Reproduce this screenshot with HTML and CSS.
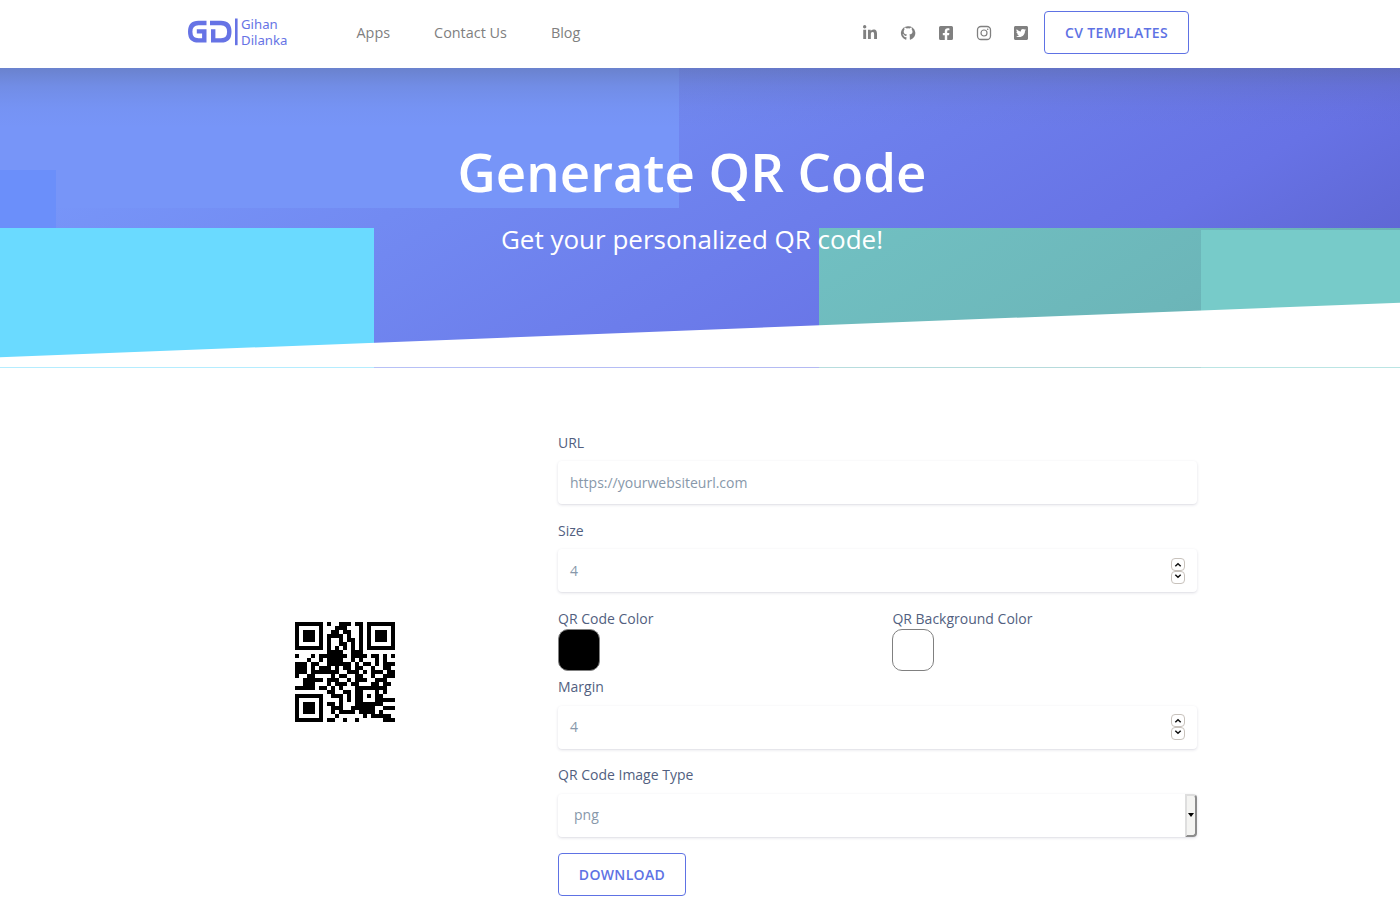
FILE: index.html
```html
<!DOCTYPE html>
<html lang="en">
<head>
<meta charset="utf-8">
<title>Generate QR Code</title>
<link rel="stylesheet" href="styles.css">
</head>
<body>
<header class="header">
  <a class="logo">
    <svg class="logo-mark" width="50" height="28" viewBox="0 0 50 28" fill="none" stroke="#6673e5" stroke-width="4.4">
      <path d="M18.5 5H10.5Q2.2 5 2.2 13.7T10.500 22.4H16.3V13.4H8.8"/>
      <path d="M22 5H33Q41.3 5 41.3 13.7T33 22.4H25.2V11.2"/>
      <path d="M48.3.5V27.2" stroke-width="2.6"/>
    </svg>
    <span class="logo-text"><span>Gihan</span><span>Dilanka</span></span>
  </a>
  <nav class="nav"><a>Apps</a><a>Contact Us</a><a>Blog</a></nav>
  <div class="social">
    <svg viewBox="0 0 448 512"><path d="M100.3 448H7.4V148.9h92.9zM53.8 108.1C24.1 108.1 0 83.5 0 53.8a53.8 53.8 0 0 1 107.6 0c0 29.7-24.1 54.3-53.8 54.3zM447.9 448h-92.7V302.4c0-34.7-.7-79.2-48.3-79.2-48.3 0-55.7 37.7-55.7 76.7V448h-92.8V148.9h89.1v40.8h1.3c12.4-23.5 42.7-48.3 87.9-48.3 94 0 111.3 61.9 111.3 142.3V448z"/></svg>
    <svg viewBox="0 0 16 16"><path fill-rule="evenodd" d="M8 1.200A6.900 6.900 0 0 0 5.800 14.700c.5.1.6-.3.6-.6v-2c-2 .4-2.500-.8-2.700-1.300-.2-.4-.5-.9-.8-1.100-.3-.2-.7-.5 0-.5.6 0 1.100.6 1.300.8.7 1.200 1.800.9 2.300.7.1-.5.3-.9.5-1.100C5 9.400 3.700 8.900 3.700 6.600c0-.8.3-1.500.8-2-.1-.2-.4-1 .1-2 0 0 .7-.2 2.100.8a7 7 0 0 1 2.800 0c1.400-1 2.100-.8 2.100-.8.4 1 .1 1.800.1 2 .5.5.8 1.200.8 2 0 2.300-1.500 2.800-3.200 3 .3.2.5.7.5 1.400v3.100c0 .3.1.7.6.6A6.900 6.900 0 0 0 8 1.200z"/></svg>
    <svg viewBox="0 0 448 512"><path d="M400 32H48A48 48 0 0 0 0 80v352a48 48 0 0 0 48 48h137V328h-63v-72h63v-55c0-62 37-96 94-96 27 0 55 5 55 5v61h-31c-31 0-40 19-40 38v47h69l-11 72h-58v152h137a48 48 0 0 0 48-48V80a48 48 0 0 0-48-48z"/></svg>
    <svg viewBox="0 0 16 16"><rect x="1.500" y="1.500" width="13" height="13" rx="3.500" fill="none" stroke="#808080" stroke-width="1.300"/><circle cx="8" cy="8" r="3" fill="none" stroke="#808080" stroke-width="1.200"/><circle cx="11.700" cy="4.300" r=".8"/></svg>
    <svg viewBox="0 0 448 512"><path d="M400 32H48C21.500 32 0 53.500 0 80v352c0 26.500 21.500 48 48 48h352c26.500 0 48-21.500 48-48V80c0-26.500-21.500-48-48-48zm-48.900 158.800c.2 2.800.2 5.700.2 8.500 0 86.700-66 186.600-186.600 186.600-37.200 0-71.700-10.800-100.700-29.400 5.300.6 10.400.8 15.800.8 30.700 0 58.900-10.400 81.400-28-28.800-.6-53-19.500-61.300-45.500 10.100 1.500 19.200 1.500 29.600-1.200-30-6.100-52.500-32.500-52.500-64.400v-.8c8.700 4.900 18.900 7.900 29.600 8.300a65.400 65.400 0 0 1-29.200-54.600c0-12.200 3.200-23.400 8.900-33.100 32.300 39.800 80.800 65.800 135.200 68.600-9.300-44.500 24-80.600 64-80.600 18.900 0 35.900 7.900 47.900 20.700 14.800-2.800 29-8.300 41.600-15.800-4.900 15.200-15.200 28-28.800 36.100 13.200-1.400 26-5.100 37.800-10.200-8.900 13.100-20.100 24.700-32.900 34z"/></svg>
  </div>
  <a class="btn btn-cv">CV TEMPLATES</a>
</header>

<section class="hero">
  <svg class="hero-shapes" width="1400" height="300" viewBox="0 0 1400 300">
    <defs>
      <linearGradient id="teal" x1="0" y1="0" x2="1" y2=".4"><stop offset="0" stop-color="#71c0c2"/><stop offset=".7" stop-color="#6cb6b9"/><stop offset="1" stop-color="#69b0b3"/></linearGradient>
      <linearGradient id="shade" x1="0" y1="0" x2="0" y2="1"><stop offset="0" stop-color="#525f7f" stop-opacity=".35"/><stop offset=".3" stop-color="#525f7f" stop-opacity=".15"/><stop offset=".65" stop-color="#525f7f" stop-opacity=".04"/><stop offset="1" stop-color="#525f7f" stop-opacity="0"/></linearGradient>
    </defs>
    <path fill="#7795f8" d="M0 0h679v140H0z"/>
    <path fill="#6b8ffa" d="M0 102h56v58H0z"/>
    <path fill="#6adaff" d="M0 160h374v140H0z"/>
    <path fill="url(#teal)" d="M819 160h581v140H819z"/>
    <path fill="#77cbc9" d="M1201 162h199v138h-199z"/>
    <path fill="url(#shade)" d="M0 0h1400v60H0z"/>
    <path fill="#fff" d="M0 289.300 1400 234.700V299H0z"/>
    <path fill="#fff" opacity=".5" d="M0 299h1400v1H0z"/>
  </svg>
  <h1 class="hero-title">Generate QR Code</h1>
  <p class="hero-lead">Get your personalized QR code!</p>
</section>

<main class="main">
  <div class="preview"><svg class="qr" id="qr" width="100" height="100" viewBox="0 0 25 25" shape-rendering="crispEdges"></svg></div>
  <form class="form">
    <label class="label">URL</label>
    <div class="field">https://yourwebsiteurl.com</div>
    <label class="label">Size</label>
    <div class="field">4
      <span class="spinner"><svg viewBox="0 0 12 11"><path d="M3.300 7.200 6 4.700 8.700 7.200"/></svg><svg viewBox="0 0 12 11"><path d="M3.300 2.800 6 5.300 8.700 2.800"/></svg></span>
    </div>
    <div class="colors">
      <div><label class="label label-tight">QR Code Color</label><div class="swatch swatch-black"></div></div>
      <div><label class="label label-tight">QR Background Color</label><div class="swatch"></div></div>
    </div>
    <label class="label label-lower">Margin</label>
    <div class="field field-lower">4
      <span class="spinner"><svg viewBox="0 0 12 11"><path d="M3.300 7.200 6 4.700 8.700 7.200"/></svg><svg viewBox="0 0 12 11"><path d="M3.300 2.800 6 5.300 8.700 2.800"/></svg></span>
    </div>
    <label class="label label-lower">QR Code Image Type</label>
    <div class="field field-select"><span class="select-value">png</span><span class="select-arrow"></span></div>
    <a class="btn btn-download">DOWNLOAD</a>
  </form>
</main>
<script src="qr.js"></script>
</body>
</html>
```
FILE: styles.css
```css
* { box-sizing: border-box; }
body { margin: 0; height: 900px; overflow: hidden; background: #fff; color: #525f7f; font: 14px/21px "Open Sans", sans-serif; }
.header { display: flex; align-items: center; height: 68px; padding: 0 211px 2px 188px; background: #fff; }
.logo { display: flex; width: 168.500px; }
.logo-text { display: flex; flex-direction: column; margin-left: 3px; margin-top: -2px; color: #6673e5; font: 13.2px/16px "Noto Sans", sans-serif; }
.nav { display: flex; gap: 44px; margin-top: -2px; color: #7f7f7f; font-size: 14.4px; }
.social { display: flex; gap: 21.700px; margin-left: auto; margin-right: 14.800px; }
.social svg { width: 16px; height: 16px; fill: #808080; }
.btn { display: inline-flex; align-items: center; justify-content: center; height: 43px; border: 1px solid #5e72e4; border-radius: 4px; color: #5e72e4; font-weight: 600; font-size: 14px; letter-spacing: .35px; }
.btn-cv { width: 145px; margin-top: -1px; }
.btn-download { width: 128px; }
.hero { position: relative; height: 300px; padding-top: 70px; padding-right: 16px; text-align: center; color: #fff; background: linear-gradient(150deg, #7795f8 15%, #6772e5 74%, #555abf 105%); }
.hero-shapes { position: absolute; left: 0; top: 0; }
.hero-title { position: relative; margin: 0; font-size: 52.800px; line-height: 68px; font-weight: 600; }
.hero-lead { position: relative; margin: 17px 0 0; font-size: 26px; line-height: 32px; font-weight: 400; }
.main { display: flex; padding: 64px 203px 0 295px; }
.preview { width: 263px; padding-top: 190px; }
.qr { display: block; }
.form { width: 639px; }
.label { display: block; margin-bottom: 8px; }
.label-tight { margin-bottom: 0; }
.label-lower { margin: -1px 0 9px; }
.field { display: flex; align-items: center; justify-content: space-between; height: 43px; margin-bottom: 16px; padding: 0 12px; border-radius: 4px; color: #8898aa; background: #fff; box-shadow: 0 1px 3px rgba(50,50,93,.15), 0 1px 0 rgba(0,0,0,.02); }
.field-lower { padding-bottom: 2px; }
.spinner { display: flex; flex-direction: column; width: 14px; }
.spinner svg { width: 14px; height: 13px; border: 1px solid #c8c2bc; border-radius: 4px; fill: none; stroke: #111; stroke-width: 1.500; }
.colors { display: grid; grid-template-columns: 334.400px 1fr; margin-bottom: 6px; }
.swatch { width: 42px; height: 42px; border: 1px solid #808080; border-radius: 10px; background: #fff; }
.swatch-black { background: #000; }
.field-select { padding: 0 0 0 16px; }
.select-value { padding-bottom: 2px; }
.select-arrow { display: flex; align-items: center; justify-content: center; width: 12px; height: 43px; padding-bottom: 2px; border: 2px solid; border-color: #dedede #8c8c8c #8c8c8c #dedede; border-radius: 0 4px 4px 0; background: #f4f4f2; }
.select-arrow::after { content: ""; border: 3.500px solid transparent; border-top: 4px solid #000; border-bottom: 0; }
```
FILE: qr.js
```js
const rows = [
  "1111111010011101101111111",
  "1000001000111000101000001",
  "1011101001101100101011101",
  "1011101011110100101011101",
  "1011101010010110101011101",
  "1000001010011010101000001",
  "1111111010101010101111111",
  "0000000011110011100000000",
  "1000101111111011110110101",
  "0001001011110010100010100",
  "1110110011111101011010111",
  "1110101110101101100100110",
  "1110111111100111010111011",
  "1001100001011001100100111",
  "0011111011100101110011100",
  "0011100010111011000110110",
  "1111101101010001111111100",
  "0000000011001101100010100",
  "1111111001110101101011000",
  "1000001000010101100011111",
  "1011101011010001111111000",
  "1011101001110011111100111",
  "1011101001011110111101000",
  "1000001000100000010111110",
  "1111111011001001000000111"
];
let d = "";
rows.forEach((row, y) => [...row].forEach((bit, x) => {
  if (bit === "1") d += `M${x} ${y}h1v1h-1z`;
}));
const path = document.createElementNS("http://www.w3.org/2000/svg", "path");
path.setAttribute("d", d);
document.getElementById("qr").appendChild(path);
```
